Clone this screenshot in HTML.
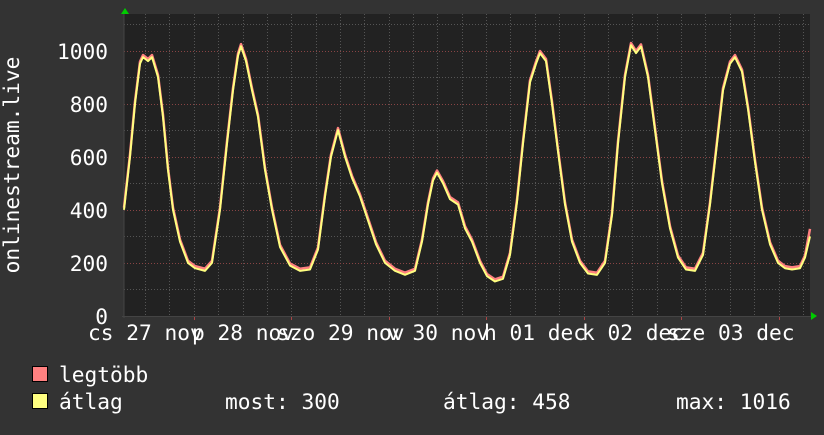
<!DOCTYPE html>
<html><head><meta charset="utf-8"><style>
body{margin:0;background:#333;width:824px;height:430px;overflow:hidden}
svg text{font-family:"DejaVu Sans Mono","Liberation Mono",monospace;font-size:21.2px;fill:#fff}
</style></head><body>
<svg width="824" height="430" xmlns="http://www.w3.org/2000/svg">
<rect width="824" height="430" fill="#333"/>
<rect x="124" y="14" width="686" height="302" fill="#222"/>
<g stroke="#555" stroke-width="1" stroke-dasharray="1,2">
<line x1="124" x2="810" y1="289.5" y2="289.5"/><line x1="124" x2="810" y1="236.5" y2="236.5"/>
<line x1="124" x2="810" y1="183.5" y2="183.5"/><line x1="124" x2="810" y1="130.5" y2="130.5"/>
<line x1="124" x2="810" y1="77.5" y2="77.5"/><line x1="124" x2="810" y1="24.5" y2="24.5"/>
</g>
<g stroke="#555" stroke-width="1" stroke-dasharray="1,2">
<line x1="145.5" x2="145.5" y1="14" y2="316"/><line x1="169.5" x2="169.5" y1="14" y2="316"/>
<line x1="194.5" x2="194.5" y1="14" y2="316"/><line x1="218.5" x2="218.5" y1="14" y2="316"/>
<line x1="243.5" x2="243.5" y1="14" y2="316"/><line x1="267.5" x2="267.5" y1="14" y2="316"/>
<line x1="291.5" x2="291.5" y1="14" y2="316"/><line x1="316.5" x2="316.5" y1="14" y2="316"/>
<line x1="340.5" x2="340.5" y1="14" y2="316"/><line x1="364.5" x2="364.5" y1="14" y2="316"/>
<line x1="389.5" x2="389.5" y1="14" y2="316"/><line x1="413.5" x2="413.5" y1="14" y2="316"/>
<line x1="437.5" x2="437.5" y1="14" y2="316"/><line x1="462.5" x2="462.5" y1="14" y2="316"/>
<line x1="486.5" x2="486.5" y1="14" y2="316"/><line x1="510.5" x2="510.5" y1="14" y2="316"/>
<line x1="535.5" x2="535.5" y1="14" y2="316"/><line x1="559.5" x2="559.5" y1="14" y2="316"/>
<line x1="584.5" x2="584.5" y1="14" y2="316"/><line x1="608.5" x2="608.5" y1="14" y2="316"/>
<line x1="632.5" x2="632.5" y1="14" y2="316"/><line x1="657.5" x2="657.5" y1="14" y2="316"/>
<line x1="681.5" x2="681.5" y1="14" y2="316"/><line x1="705.5" x2="705.5" y1="14" y2="316"/>
<line x1="730.5" x2="730.5" y1="14" y2="316"/><line x1="754.5" x2="754.5" y1="14" y2="316"/>
<line x1="779.5" x2="779.5" y1="14" y2="316"/><line x1="803.5" x2="803.5" y1="14" y2="316"/>
</g>
<g stroke="#844" stroke-width="1" stroke-dasharray="1,2">
<line x1="124" x2="810" y1="263.5" y2="263.5"/><line x1="124" x2="810" y1="210.5" y2="210.5"/>
<line x1="124" x2="810" y1="157.5" y2="157.5"/><line x1="124" x2="810" y1="104.5" y2="104.5"/>
<line x1="124" x2="810" y1="51.5" y2="51.5"/>
</g>
<g stroke="#a44"><line x1="194.5" x2="194.5" y1="316" y2="320"/><line x1="291.5" x2="291.5" y1="316" y2="320"/><line x1="389.5" x2="389.5" y1="316" y2="320"/><line x1="486.5" x2="486.5" y1="316" y2="320"/><line x1="584.5" x2="584.5" y1="316" y2="320"/><line x1="681.5" x2="681.5" y1="316" y2="320"/><line x1="779.5" x2="779.5" y1="316" y2="320"/></g>
<line x1="124" x2="124" y1="12" y2="318" stroke="#444"/>
<line x1="122" x2="812" y1="316.5" y2="316.5" stroke="#444"/>
<g transform="translate(0,316) scale(1,-0.2655)" fill="none" stroke-linejoin="round">
<polyline vector-effect="non-scaling-stroke" stroke="#ff8080" stroke-width="2.5" transform="translate(0,8)" points="124,400 130,600 135,800 140,950 143,975 148,960 152,975 158,900 163,750 168,550 173,400 180,280 188,200 195,180 205,170 212,200 220,400 227,650 233,850 238,980 241,1016 246,960 252,850 258,750 265,550 272,400 280,260 290,190 300,170 310,175 318,250 325,450 331,600 338,700 345,600 352,520 360,450 368,360 376,270 385,200 395,170 405,155 415,170 422,280 428,420 433,510 437,540 443,500 450,440 458,420 465,330 472,280 480,200 487,150 495,130 503,140 510,230 517,430 523,650 530,880 536,950 540,990 546,960 552,800 558,620 565,420 572,280 580,200 588,160 597,155 605,200 612,380 618,650 625,900 631,1020 636,990 641,1015 648,900 655,700 662,500 670,330 678,220 686,175 695,170 703,230 710,420 717,650 723,850 730,950 735,975 742,920 748,780 755,580 762,400 770,270 778,200 785,180 792,175 800,180 805,220 810,320"/>
<polyline vector-effect="non-scaling-stroke" stroke="#ffff80" stroke-width="2" points="124,400 130,600 135,800 140,950 143,975 148,960 152,975 158,900 163,750 168,550 173,400 180,280 188,200 195,180 205,170 212,200 220,400 227,650 233,850 238,980 241,1016 246,960 252,850 258,750 265,550 272,400 280,260 290,190 300,170 310,175 318,250 325,450 331,600 338,700 345,600 352,520 360,450 368,360 376,270 385,200 395,170 405,155 415,170 422,280 428,420 433,510 437,540 443,500 450,440 458,420 465,330 472,280 480,200 487,150 495,130 503,140 510,230 517,430 523,650 530,880 536,950 540,990 546,960 552,800 558,620 565,420 572,280 580,200 588,160 597,155 605,200 612,380 618,650 625,900 631,1020 636,990 641,1015 648,900 655,700 662,500 670,330 678,220 686,175 695,170 703,230 710,420 717,650 723,850 730,950 735,975 742,920 748,780 755,580 762,400 770,270 778,200 785,180 792,175 800,180 805,220 810,300"/>
</g>
<polygon points="121,14 129,14 125,8" fill="#0c0"/>
<polygon points="811,312 811,320 817,316" fill="#0c0"/>
<g text-anchor="end">
<text x="108" y="59">1000</text><text x="108" y="112">800</text><text x="108" y="165">600</text>
<text x="108" y="218">400</text><text x="108" y="271">200</text><text x="108" y="324">0</text>
</g>
<text transform="translate(19,165) rotate(-90)" text-anchor="middle">onlinestream.live</text>
<text x="88" y="340">cs 27 nov</text><text x="192" y="340">p 28 nov</text>
<text x="277" y="340">szo 29 nov</text><text x="387" y="340">v 30 nov</text>
<text x="484" y="340">h 01 dec</text><text x="582" y="340">k 02 dec</text>
<text x="667" y="340">sze 03 dec</text>
<rect x="32.5" y="366.5" width="15" height="15" fill="#ff8080" stroke="#000"/>
<rect x="32.5" y="393.5" width="15" height="15" fill="#ffff80" stroke="#000"/>
<text x="59" y="382">legtöbb</text>
<text x="59" y="409">átlag</text>
<text x="225" y="409">most: 300</text>
<text x="443" y="409">átlag: 458</text>
<text x="676" y="409">max: 1016</text>
</svg>
</body></html>
